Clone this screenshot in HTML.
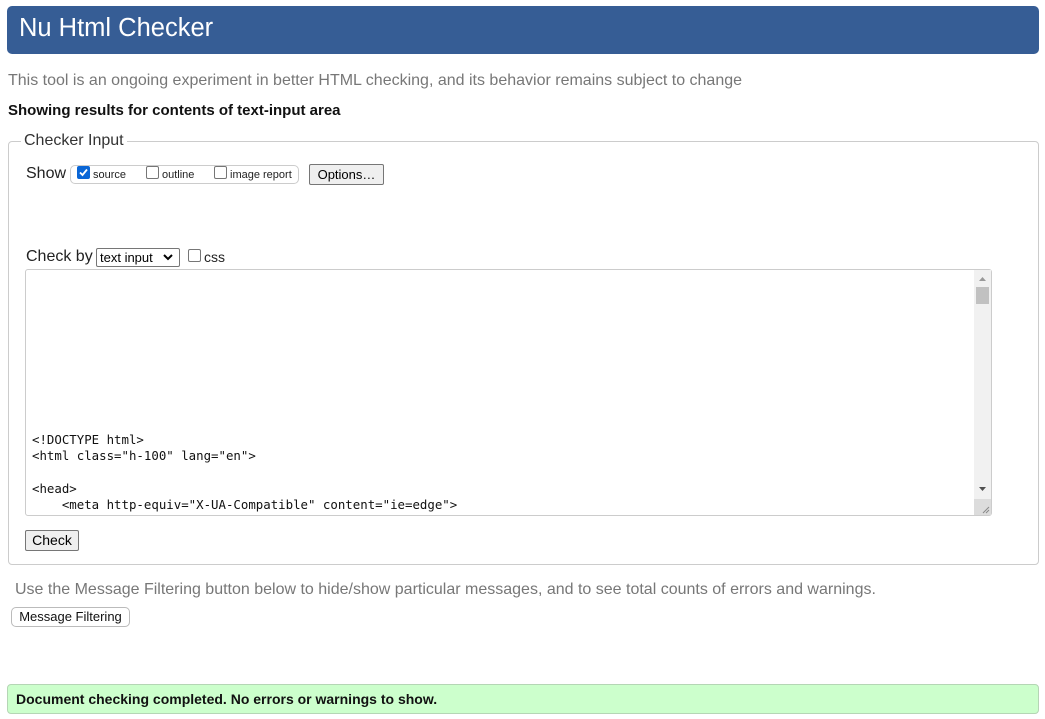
<!DOCTYPE html>
<html><head><style>
*{box-sizing:border-box}
body{margin:0;width:1045px;height:719px;background:#fff;font-family:"Liberation Sans",Arial,sans-serif;position:relative;overflow:hidden}
.a{position:absolute;white-space:nowrap}
.btn{position:absolute;background:#efefef;border:1px solid #767676;border-radius:2px;font-size:13px;color:#000;text-align:center;line-height:18px}
.cb{position:absolute;width:13px;height:13px;border:1px solid #767676;border-radius:2px;background:#fff}
</style></head><body>
<div class="a" style="left:7px;top:6px;width:1032px;height:48px;background:#365d95;border-radius:5px"></div>
<div class="a" style="left:19px;top:14px;font-size:25.5px;color:#fff">Nu Html Checker</div>
<div class="a" style="left:8px;top:72px;font-size:16px;color:#777">This tool is an ongoing experiment in better HTML checking, and its behavior remains subject to change</div>
<div class="a" style="left:8px;top:102px;font-size:15px;font-weight:bold;color:#111">Showing results for contents of text-input area</div>

<div class="a" style="left:8px;top:141px;width:1031px;height:424px;border:1px solid #ccc;border-radius:4px"></div>
<div class="a" style="left:21px;top:132px;padding:0 3px;background:#fff;font-size:16px;color:#333">Checker Input</div>

<div class="a" style="left:26px;top:165px;font-size:16px;color:#222">Show</div>
<div class="a" style="left:70px;top:165px;width:229px;height:19px;border:1px solid #ccc;border-radius:5px"></div>
<div class="cb" style="left:77px;top:166px;background:#0a66d6;border-color:#0a66d6"></div>
<svg class="a" style="left:78px;top:167px" width="11" height="11" viewBox="0 0 11 11"><path d="M2 5.5 L4.5 8 L9 2.5" stroke="#fff" stroke-width="1.8" fill="none"/></svg>
<div class="a" style="left:93px;top:169px;font-size:11px;color:#222">source</div>
<div class="cb" style="left:146px;top:166px"></div>
<div class="a" style="left:162px;top:169px;font-size:11px;color:#222">outline</div>
<div class="cb" style="left:214px;top:166px"></div>
<div class="a" style="left:230px;top:169px;font-size:11px;color:#222">image report</div>
<div class="btn" style="left:309px;top:164px;width:75px;height:21px;font-size:13px;line-height:19px">Options…</div>

<div class="a" style="left:26px;top:248px;font-size:16px;color:#222">Check by</div>
<div class="a" style="left:96px;top:248px;width:84px;height:19px;border:1px solid #767676;border-radius:2px;font-size:13px;line-height:17px;padding-left:3px;color:#000">text input</div>
<svg class="a" style="left:163px;top:253px" width="10" height="8" viewBox="0 0 10 8"><path d="M1 2 L5 6 L9 2" stroke="#000" stroke-width="2" fill="none"/></svg>
<div class="cb" style="left:188px;top:249px"></div>
<div class="a" style="left:204px;top:249px;font-size:14px;color:#222">css</div>

<div class="a" style="left:25px;top:269px;width:967px;height:247px;border:1px solid #ccc;border-radius:3px"></div>
<div class="a" style="left:974px;top:270px;width:17px;height:245px;background:#f1f1f1"></div>
<div class="a" style="left:976px;top:287px;width:13px;height:17px;background:#c1c1c1"></div>
<div class="a" style="left:974px;top:499px;width:17px;height:16px;background:#dcdcdc"></div>
<svg class="a" style="left:974px;top:270px" width="17" height="245" viewBox="0 0 17 245"><path d="M5 11 L12 11 L8.5 7Z" fill="#999"/><path d="M5 217 L12 217 L8.5 221Z" fill="#505050"/><path d="M9 243 L15 237 M12 243 L15 240" stroke="#888" stroke-width="1"/></svg>
<pre class="a" style="left:32px;top:432px;margin:0;white-space:pre;font-family:'DejaVu Sans Mono','Liberation Mono',monospace;font-size:12.4px;line-height:16.3px;color:#111">&lt;!DOCTYPE html&gt;
&lt;html class="h-100" lang="en"&gt;

&lt;head&gt;
    &lt;meta http-equiv="X-UA-Compatible" content="ie=edge"&gt;</pre>

<div class="btn" style="left:25px;top:530px;width:54px;height:21px;font-size:14px">Check</div>

<div class="a" style="left:15px;top:581px;font-size:16px;color:#777">Use the Message Filtering button below to hide/show particular messages, and to see total counts of errors and warnings.</div>
<div class="a" style="left:11px;top:607px;width:119px;height:20px;border:1px solid #bbb;border-radius:5px;font-size:13px;line-height:18px;text-align:center;color:#111">Message Filtering</div>

<div class="a" style="left:7px;top:684px;width:1032px;height:30px;background:#ccffcc;border:1px solid #b5d6b5;border-radius:4px"></div>
<div class="a" style="left:16px;top:691px;font-size:14px;font-weight:bold;color:#111">Document checking completed. No errors or warnings to show.</div>
</body></html>
